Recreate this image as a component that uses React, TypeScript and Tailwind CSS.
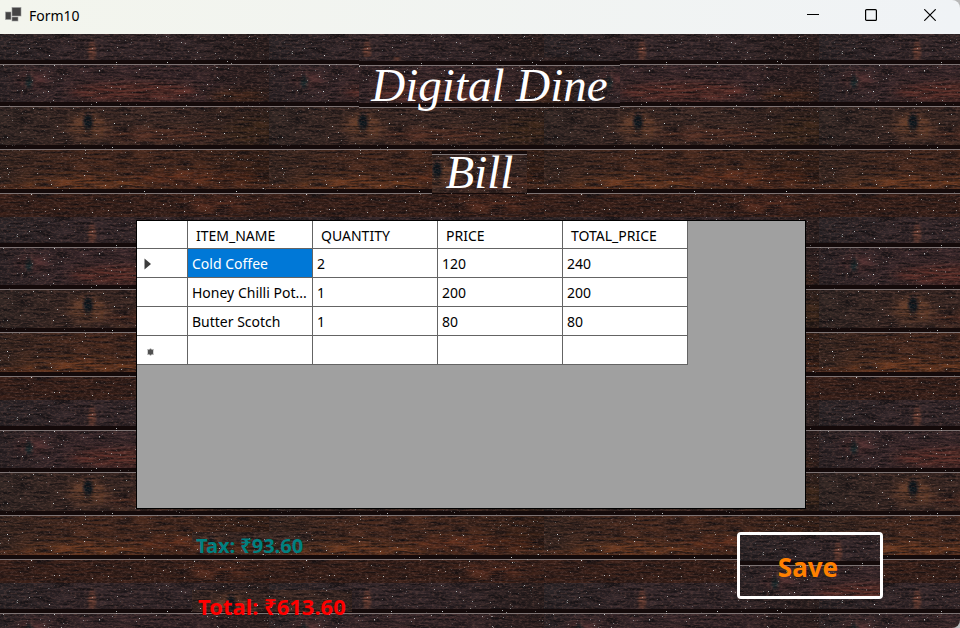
import type { ReactNode } from "react";

const TILE_W = 275;
const TILE_H = 183;

const planks = [
  { y: 0, h: 26, fill: "#35282b" },
  { y: 30, h: 39, fill: "#3a282b" },
  { y: 72, h: 39, fill: "#3e2a24" },
  { y: 115, h: 41, fill: "#4a2a1d" },
  { y: 159, h: 24, fill: "#3a2018" },
];

const stains = [
  { cx: 98, cy: 17, rx: 4, ry: 10, fill: "#a65c42", o: 0.6 },
  { cx: 38, cy: 46, rx: 16, ry: 9, fill: "#7b3c3b", o: 0.5 },
  { cx: 35, cy: 48, rx: 4, ry: 6, fill: "#1b3034", o: 1 },
  { cx: 140, cy: 58, rx: 65, ry: 10, fill: "#7c3426", o: 0.55 },
  { cx: 245, cy: 62, rx: 30, ry: 6, fill: "#763a15", o: 0.5 },
  { cx: 94, cy: 92, rx: 20, ry: 13, fill: "#8e5230", o: 0.5 },
  { cx: 94, cy: 88, rx: 5, ry: 9, fill: "#10161f", o: 1 },
  { cx: 170, cy: 101, rx: 60, ry: 7, fill: "#6c3520", o: 0.5 },
  { cx: 258, cy: 98, rx: 24, ry: 12, fill: "#6c421b", o: 0.4 },
  { cx: 85, cy: 149, rx: 70, ry: 6, fill: "#9a4e20", o: 0.5 },
  { cx: 210, cy: 144, rx: 70, ry: 7, fill: "#80381e", o: 0.5 },
  { cx: 225, cy: 170, rx: 35, ry: 8, fill: "#763824", o: 0.4 },
];

function scatter(count: number) {
  let seed = 7;
  const next = () => {
    seed = (seed * 16807) % 2147483647;
    return seed / 2147483647;
  };
  return Array.from({ length: count }, () => ({
    x: Math.floor(next() * TILE_W),
    y: Math.floor(next() * TILE_H),
    o: 0.15 + next() * next() * 0.85,
  }));
}

const dust = scatter(460);

function WoodDefs() {
  return (
    <svg className="absolute size-0" aria-hidden="true">
      <defs>
        <filter id="grain" x="0" y="0" width="100%" height="100%" colorInterpolationFilters="sRGB">
          <feTurbulence type="fractalNoise" baseFrequency="0.05 0.5" numOctaves="5" seed="4" />
          <feColorMatrix values="0 0 0 0 0.06  0 0 0 0 0.05  0 0 0 0 0.06  1.9 0 0 0 -0.65" />
        </filter>
        <filter id="sheen" x="0" y="0" width="100%" height="100%" colorInterpolationFilters="sRGB">
          <feTurbulence type="fractalNoise" baseFrequency="0.3 0.6" numOctaves="3" seed="12" />
          <feColorMatrix values="0 0 0 0 0.52  0 0 0 0 0.36  0 0 0 0 0.32  0 2 0 0 -0.9" />
        </filter>
        <filter id="stain" x="-100%" y="-100%" width="300%" height="300%">
          <feGaussianBlur stdDeviation="4 3" />
        </filter>
        <filter id="knot" x="-100%" y="-50%" width="300%" height="200%">
          <feGaussianBlur stdDeviation="1 2" />
        </filter>
        <linearGradient id="shade">
          <stop offset="0" stopColor="#1c2224" stopOpacity="0.35" />
          <stop offset="0.3" stopColor="#1c2224" stopOpacity="0" />
          <stop offset="0.7" stopColor="#180f08" stopOpacity="0" />
          <stop offset="1" stopColor="#180f08" stopOpacity="0.4" />
        </linearGradient>
        <pattern id="wood" width={TILE_W} height={TILE_H} patternUnits="userSpaceOnUse">
          <rect width={TILE_W} height={TILE_H} fill="#120b0b" />
          {planks.map((p) => (
            <rect key={p.y} y={p.y} width={TILE_W} height={p.h} fill={p.fill} />
          ))}
          {stains.map((s, i) => (
            <ellipse
              key={i}
              cx={s.cx}
              cy={s.cy}
              rx={s.rx}
              ry={s.ry}
              fill={s.fill}
              opacity={s.o}
              filter={s.rx < 10 ? "url(#knot)" : "url(#stain)"}
            />
          ))}
          <rect width={TILE_W} height="150" fill="url(#shade)" />
          <rect width={TILE_W} height={TILE_H} filter="url(#grain)" />
          <rect width={TILE_W} height={TILE_H} filter="url(#sheen)" opacity="0.5" />
          {planks.slice(1).map((p) => (
            <g key={p.y}>
              <rect y={p.y - 4} width={TILE_W} height="4" fill="#140a0a" />
              <rect y={p.y} width={TILE_W} height="1" fill="#7c7272" />
            </g>
          ))}
          {dust.map((d, i) => (
            <rect key={i} x={d.x} y={d.y} width="1" height="1" fill="#d6dcdc" opacity={d.o} />
          ))}
        </pattern>
      </defs>
    </svg>
  );
}

function Wood({ shift }: { shift: string }) {
  return (
    <svg className="absolute inset-0 -z-10 size-full" aria-hidden="true">
      <g transform={shift}>
        <rect width="200%" height="300%" fill="url(#wood)" />
      </g>
    </svg>
  );
}

function WoodLabel({ shift, className, children }: { shift: string; className: string; children: ReactNode }) {
  return (
    <div className={`relative isolate whitespace-nowrap ${className}`}>
      <Wood shift={shift} />
      {children}
    </div>
  );
}

const columns = ["ITEM_NAME", "QUANTITY", "PRICE", "TOTAL_PRICE"];
const rows = [
  ["Cold Coffee", "2", "120", "240"],
  ["Honey Chilli Pot...", "1", "200", "200"],
  ["Butter Scotch", "1", "80", "80"],
  ["", "", "", ""],
];

function RowMarker({ index }: { index: number }) {
  if (index === 0)
    return (
      <svg className="mt-0.5 ml-[7px]" width="8" height="12" viewBox="0 0 8 12" aria-label="Current row">
        <path d="M0.5 0.5 L7 6 L0.5 11.5Z" fill="#3c3c3c" />
      </svg>
    );
  if (index === 3)
    return (
      <svg className="mt-1 ml-[9px]" width="9" height="8" viewBox="0 0 9 8" aria-label="New row">
        <path d="M4.5 0.5V7.5M1.5 1.5l6 5M7.5 1.5l-6 5" stroke="#888" strokeWidth="1.4" />
        <circle cx="4.5" cy="4" r="2.8" fill="#505050" />
      </svg>
    );
  return null;
}

function BillGrid() {
  return (
    <div className="min-h-[289px] border border-black bg-[#a0a0a0]">
      <table className="w-[551px] table-fixed border-separate border-spacing-0 bg-white text-left text-sm leading-5 text-black">
        <colgroup>
          <col className="w-[51px]" />
          {columns.map((c) => (
            <col key={c} className="w-[125px]" />
          ))}
        </colgroup>
        <thead>
          <tr className="h-[28px]">
            <th className="border-r border-b border-[#646464] p-0" aria-label="Row" />
            {columns.map((c) => (
              <th key={c} scope="col" className="border-r border-b border-[#646464] p-0 pt-0.5 pl-2 font-normal">
                {c}
              </th>
            ))}
          </tr>
        </thead>
        <tbody>
          {rows.map((row, r) => (
            <tr key={r} className="h-[29px]">
              <th className="border-r border-b border-[#646464] p-0" aria-label={`Row ${r + 1}`}>
                <RowMarker index={r} />
              </th>
              {row.map((cell, c) => (
                <td
                  key={c}
                  className={`border-r border-b border-[#646464] p-0 pt-0.5 pl-1 whitespace-nowrap ${
                    r === 0 && c === 0 ? "bg-[#0078d7] text-white" : ""
                  }`}
                >
                  {cell}
                </td>
              ))}
            </tr>
          ))}
        </tbody>
      </table>
    </div>
  );
}

function TitleBar() {
  return (
    <header className="flex h-[34px] items-center bg-linear-to-r from-[#f3f5ed] to-[#f0f3f6] text-black">
      <svg className="mb-1 ml-[5px]" width="17" height="16" viewBox="0 0 17 16" aria-hidden="true">
        <g fill="#444" stroke="#999" strokeWidth="0.6">
          <rect x="7" y="0.5" width="9" height="8.5" />
          <rect x="0.5" y="5" width="5.5" height="7.5" />
          <rect x="7" y="10" width="6" height="4" />
        </g>
      </svg>
      <h1 className="mb-0.5 ml-[7px] grow text-sm">Form10</h1>
      <button className="flex h-full w-[58px] items-center justify-center pb-1" aria-label="Minimize">
        <svg width="12" height="12" viewBox="0 0 12 12">
          <path d="M0 5.5h12" stroke="#000" />
        </svg>
      </button>
      <button className="flex h-full w-[58px] items-center justify-center pb-1" aria-label="Maximize">
        <svg width="12" height="12" viewBox="0 0 12 12">
          <rect x="0.6" y="0.6" width="10.8" height="10.8" rx="1" fill="none" stroke="#000" strokeWidth="1.2" />
        </svg>
      </button>
      <button className="flex h-full w-[60px] items-center justify-center pb-1" aria-label="Close">
        <svg width="12" height="12" viewBox="0 0 12 12">
          <path d="M0.3 0.3 11.7 11.7M11.7 0.3 0.3 11.7" stroke="#000" strokeWidth="1.2" />
        </svg>
      </button>
    </header>
  );
}

export default function App() {
  return (
    <div className="bg-[#b8b8b8] font-['Noto_Sans','Open_Sans',sans-serif]">
      <WoodDefs />
      <div className="flex min-h-screen flex-col overflow-hidden rounded-r-lg">
        <TitleBar />
        <main className="relative isolate flex grow flex-col pr-[154px] pl-[136px]">
          <Wood shift="translate(-6 0)" />
          <div className="mt-[23px] ml-[37px] flex flex-col items-center font-['Liberation_Serif',serif] text-[47px] text-white italic">
            <WoodLabel shift="translate(-60 -22)" className="h-[52px] px-3 leading-[56px]">
              <h2>Digital Dine</h2>
            </WoodLabel>
            <WoodLabel shift="translate(-89 -69)" className="mt-[42px] mr-5 h-[43px] px-3.5 leading-[43px]">
              <h3>Bill</h3>
            </WoodLabel>
          </div>
          <div className="mt-[26px]">
            <BillGrid />
          </div>
          <div className="mt-[23px] flex items-start justify-between pl-14">
            <div className="font-bold">
              <WoodLabel shift="translate(-75 -74)" className="w-fit pr-2 pl-1 text-xl leading-7 text-[#008080]">
                Tax: ₹93.60
              </WoodLabel>
              <WoodLabel shift="translate(-55 -74)" className="mt-[30px] w-fit px-1.5 text-[22px] leading-8 text-[#ff0000]">
                Total: ₹613.60
              </WoodLabel>
            </div>
            <button className="relative isolate -mr-[77px] h-[67px] w-[146px] overflow-hidden rounded border-3 border-white pt-1 pr-1 text-[26px] font-bold text-[#ff8000]">
              <Wood shift="translate(0 0)" />
              Save
            </button>
          </div>
        </main>
      </div>
    </div>
  );
}
